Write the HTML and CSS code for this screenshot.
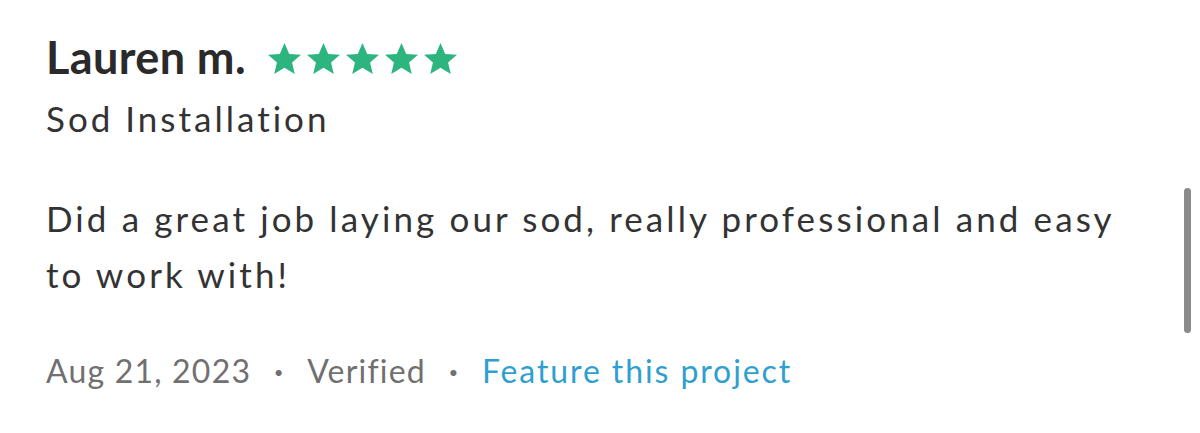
FILE: index.html
```html
<!DOCTYPE html>
<html>
<head>
<meta charset="utf-8">
<link rel="stylesheet" href="styles.css">
</head>
<body>
<div class="page">
  <article class="review">
    <header class="head">
      <h1 class="name">Lauren m.</h1>
      <div class="stars">
        <svg viewBox="1.1 1.5 21.8 20.5"><path d="M12 1.5l3.1 7.2 7.8.6-5.9 5.1 1.8 7.6L12 17.9l-6.8 4.1 1.8-7.6-5.9-5.1 7.8-.6z"/></svg>
        <svg viewBox="1.1 1.5 21.8 20.5"><path d="M12 1.5l3.1 7.2 7.8.6-5.9 5.1 1.8 7.6L12 17.9l-6.8 4.1 1.8-7.6-5.9-5.1 7.8-.6z"/></svg>
        <svg viewBox="1.1 1.5 21.8 20.5"><path d="M12 1.5l3.1 7.2 7.8.6-5.9 5.1 1.8 7.6L12 17.9l-6.8 4.1 1.8-7.6-5.9-5.1 7.8-.6z"/></svg>
        <svg viewBox="1.1 1.5 21.8 20.5"><path d="M12 1.5l3.1 7.2 7.8.6-5.9 5.1 1.8 7.6L12 17.9l-6.8 4.1 1.8-7.6-5.9-5.1 7.8-.6z"/></svg>
        <svg viewBox="1.1 1.5 21.8 20.5"><path d="M12 1.5l3.1 7.2 7.8.6-5.9 5.1 1.8 7.6L12 17.9l-6.8 4.1 1.8-7.6-5.9-5.1 7.8-.6z"/></svg>
      </div>
    </header>
    <p class="service">Sod Installation</p>
    <p class="body">Did a great job laying our sod, really professional and easy to work with!</p>
    <div class="meta">
      <span>Aug 21, 2023</span>
      <span class="dot">·</span>
      <span>Verified</span>
      <span class="dot">·</span>
      <a class="link" href="#">Feature this project</a>
    </div>
  </article>
  <div class="scrollbar"></div>
</div>
</body>
</html>
```
FILE: styles.css
```css
html, body {
  margin: 0;
  padding: 0;
  background: #fff;
}
.page {
  display: flex;
  justify-content: space-between;
  width: 1200px;
  height: 433px;
  box-sizing: border-box;
  padding: 0 9px 0 46px;
  font-family: Lato, "Noto Sans", sans-serif;
  color: #2f2f2f;
}
.review {
  width: 1100px;
  padding-top: 30px;
}
.head {
  display: flex;
  align-items: flex-start;
  gap: 22px;
}
.name {
  margin: 0;
  font-size: 45px;
  font-weight: 700;
  line-height: 54px;
  letter-spacing: 0.4px;
  color: #2a2a2a;
}
.stars {
  display: flex;
  gap: 6px;
  margin-top: 13px;
}
.stars svg {
  width: 33px;
  height: 31px;
  fill: #2db57f;
}
.service {
  margin: 12px 0 0;
  font-size: 35px;
  line-height: 44px;
  letter-spacing: 3px;
  color: #333;
}
.body {
  margin: 50px 0 0;
  font-size: 35px;
  line-height: 56px;
  letter-spacing: 3.1px;
  color: #333;
}
.meta {
  display: flex;
  align-items: baseline;
  margin-top: 49px;
  font-size: 32px;
  line-height: 40px;
  letter-spacing: 1.2px;
  color: #707070;
}
.dot {
  margin: 0 23px;
  font-weight: 700;
}
.link {
  color: #2e9fd0;
  letter-spacing: 1.9px;
  text-decoration: none;
}
.scrollbar {
  margin-top: 188px;
  width: 7px;
  height: 145px;
  border-radius: 4px;
  background: #8a8a8a;
}
```
